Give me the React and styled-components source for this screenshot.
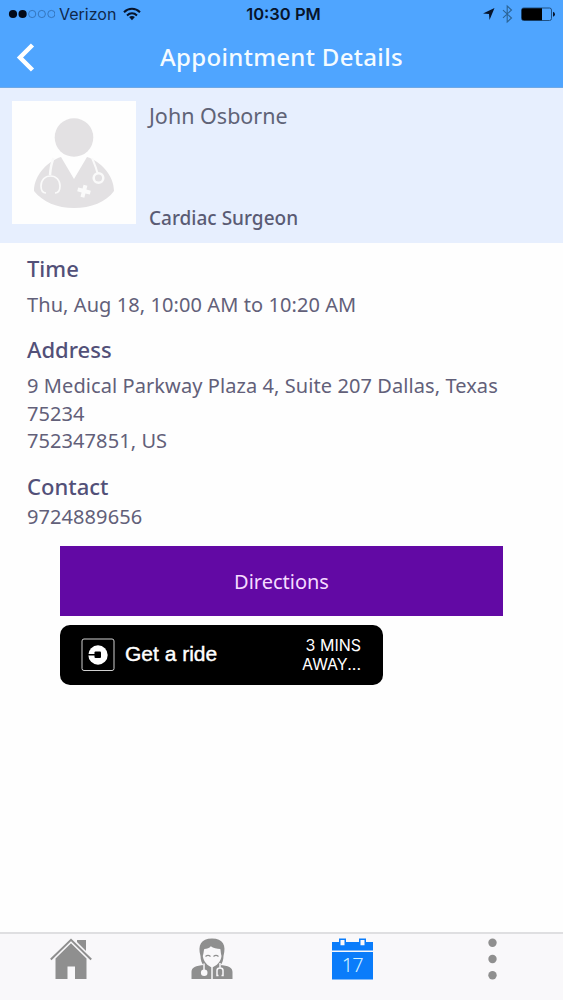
import React from 'react';
import styled, { createGlobalStyle } from 'styled-components';

const colors = {
	blue: '#4fa5ff',
	active: '#0a7cfa',
	pale: '#e7effe',
	heading: '#525078',
	body: '#626079',
	purple: '#6209a4',
	gray: '#8f8f8f'
};

const GlobalStyle = createGlobalStyle`
	* {
		box-sizing: border-box;
	}
	body {
		margin: 0;
		background: #fff;
		font-family: 'Noto Sans', 'Open Sans', sans-serif;
	}
	svg {
		display: block;
		flex: none;
	}
`;

const Screen = styled.div`
	display: flex;
	flex-direction: column;
	width: 563px;
	height: 1000px;
	overflow: hidden;
	background: #fefefe;
`;

const Header = styled.header`
	height: 88px;
	background: ${colors.blue};
	border-bottom: 1px solid #6fa9e6;
`;

const StatusBar = styled.div`
	display: grid;
	grid-template-columns: 1fr auto 1fr;
	align-items: center;
	height: 28px;
	padding: 0 8px;
	font-family: Inter, 'Liberation Sans', sans-serif;
	color: #07142b;
`;

const StatusGroup = styled.div`
	display: flex;
	align-items: center;
	justify-content: ${props => (props.$end ? 'flex-end' : 'flex-start')};
`;

const Carrier = styled.span`
	margin: 0 7px 0 4px;
	font-size: 16px;
	line-height: 28px;
	color: #10284b;
`;

const Clock = styled.span`
	padding-left: 4px;
	font-size: 16.5px;
	line-height: 28px;
	font-weight: 600;
`;

const TitleBar = styled.div`
	display: grid;
	grid-template-columns: 60px 1fr 60px;
	align-items: center;
	height: 58px;
	padding-left: 15px;
	padding-right: 15px;
`;

const Title = styled.h1`
	margin: 0;
	padding-bottom: 1px;
	font-size: 24px;
	line-height: 56px;
	font-weight: 500;
	letter-spacing: 0.33px;
	text-align: center;
	white-space: nowrap;
	color: #f4fbff;
`;

const Profile = styled.section`
	display: flex;
	height: 155px;
	padding: 13px 12px;
	background: ${colors.pale};
`;

const Photo = styled.div`
	width: 124px;
	height: 123px;
	background: #fefefe;
`;

const ProfileText = styled.div`
	display: flex;
	flex-direction: column;
	justify-content: space-between;
	height: 130px;
	padding-left: 13px;
`;

const DoctorName = styled.span`
	font-size: 21.5px;
	line-height: 30px;
	color: #5f6377;
`;

const Speciality = styled.span`
	font-size: 19px;
	line-height: 26px;
	font-weight: 500;
	color: #5a5b74;
`;

const Details = styled.main`
	flex: 1;
	padding: 10px 28px 0 27px;
`;

const Heading = styled.h2`
	margin: 0;
	font-size: 22px;
	line-height: 30px;
	font-weight: 500;
	color: ${colors.heading};
`;

const Text = styled.p`
	margin: ${props => props.$gap || '0'};
	font-size: 20px;
	line-height: 27.6px;
	letter-spacing: 0.08px;
	white-space: nowrap;
	color: ${colors.body};
`;

const Actions = styled.div`
	display: flex;
	flex-direction: column;
	align-items: flex-start;
	gap: 9px;
	padding: 0 33px;
`;

const DirectionsButton = styled.button`
	width: 443px;
	height: 70px;
	padding: 1px 0 0;
	border: 0;
	background: ${colors.purple};
	font-family: inherit;
	font-size: 20px;
	color: #f5dcff;
`;

const RideButton = styled.button`
	display: flex;
	align-items: center;
	width: 323px;
	height: 60px;
	padding: 0 22px 0 21px;
	border: 0;
	border-radius: 10px;
	background: #000;
	font-family: 'Liberation Sans', Arial, sans-serif;
	color: #fff;
`;

const RideLabel = styled.span`
	flex: 1;
	padding: 0 0 2px 10px;
	font-size: 21px;
	text-align: left;
	-webkit-text-stroke: 0.4px #fff;
`;

const RideEta = styled.span`
	font-family: Inter, sans-serif;
	font-size: 16px;
	line-height: 19px;
	text-align: right;
`;

const TabBar = styled.nav`
	display: grid;
	grid-template-columns: repeat(4, 1fr);
	height: 68px;
	border-top: 2px solid #dfdfe1;
	background: #f9f8fa;
`;

const Tab = styled.a`
	display: flex;
	justify-content: center;
	padding: 4px 0 0 1px;
	color: ${props => (props.$active ? colors.active : colors.gray)};
`;

const CalendarIcon = styled.div`
	position: relative;
	width: 41px;
	height: 42px;
`;

const CalendarDay = styled.span`
	position: absolute;
	left: 0;
	top: 14px;
	width: 41px;
	font-size: 20px;
	font-weight: 300;
	line-height: 26px;
	text-align: center;
	letter-spacing: -0.8px;
	color: #d2f1ff;
`;

function SignalDots() {
	return (
		<svg width="47" height="10" viewBox="0 0 47 10">
			{[0, 1, 2, 3, 4].map(i => (
				<circle
					key={i}
					cx={5 + i * 9.6}
					cy="5"
					r={i < 2 ? 4.1 : 3.6}
					fill={i < 2 ? '#030a18' : 'none'}
					stroke={i < 2 ? 'none' : '#2f6aac'}
					strokeWidth="0.8"
				/>
			))}
		</svg>
	);
}

function Wifi() {
	return (
		<svg width="18" height="14" viewBox="0 0 18 14" fill="none" stroke="#07142b" strokeWidth="2">
			<path d="M1 5.3C5.6.7 12.4.7 17 5.3M4 8.5c3-2.9 7-2.9 10 0" />
			<path d="M6.1 10.1c1.8-1.5 4-1.5 5.8 0L9 13.3Z" fill="#07142b" stroke="none" />
		</svg>
	);
}

function StatusIcons() {
	return (
		<svg width="72" height="20" viewBox="0 0 72 20">
			<path d="M0 9.5 11.5 4 6.5 16 6 10Z" fill="#07142b" />
			<path d="m20 6.2 8.5 7.8-4.3 4V2l4.3 4-8.5 7.8" fill="none" stroke="#2b6395" strokeWidth="1.1" />
			<rect x="38.5" y="4" width="30" height="12.5" rx="2" fill="none" stroke="#1f5083" />
			<path d="M40.5 4.3H59v12H40.5q-1.7 0-1.7-1.7V6q0-1.7 1.7-1.7Z" fill="#000" />
			<path d="M70 7.7q2 .8 2 2.5t-2 2.5Z" fill="#07142b" />
		</svg>
	);
}

function DoctorPhoto() {
	return (
		<svg width="124" height="123" viewBox="0 0 124 123">
			<circle cx="62" cy="36.5" r="19.3" fill="#e3e1e3" />
			<path
				d="M49 56C36 60 22 74 22 90c9 11 23 17 40 17s32-6 40-17c0-16-14-30-27-34L62 78Z"
				fill="#e3e1e3"
			/>
			<g fill="none" stroke="#fafafa">
				<path d="M41.500 57c-2 5-3 10-3.500 17" strokeWidth="2.500" />
				<path d="M34 92c-4 0-5-4-5-7 0-6 4-10 9.500-10s9.500 4 9.500 10c0 3-1 7-5 7" strokeWidth="1.700" />
				<path d="M80 57c2 5 4 9 5.500 15" strokeWidth="2" />
				<circle cx="86.500" cy="77" r="4.800" strokeWidth="2.500" />
			</g>
			<path d="M70 84h4v4h4.500v4H74v4.500h-4V92h-4.500v-4H70Z" fill="#fafafa" transform="rotate(14 72 90)" />
		</svg>
	);
}

function UberIcon() {
	return (
		<svg width="34" height="34" viewBox="0 0 34 34">
			<rect x="1" y="1" width="32" height="31.500" rx="2" fill="none" stroke="#d0d0d0" strokeWidth="1" />
			<circle cx="17" cy="17" r="9.700" fill="#fff" />
			<rect x="13.500" y="13.500" width="6.500" height="6.500" rx="1" fill="#000" />
			<rect x="6.500" y="16" width="8" height="1.500" fill="#000" />
		</svg>
	);
}

function HomeIcon() {
	return (
		<svg width="42" height="42" viewBox="0 0 42 42" fill="currentColor">
			<path d="M27 2h9v11l-9-9Z" />
			<path d="M.800 21.500 21 1.800l20.200 19.700" fill="none" stroke="currentColor" strokeWidth="2" />
			<path d="M5.500 20.500 21 5.200l15.500 15.300V41H25V28.500h-7.500V41h-12Z" />
		</svg>
	);
}

function DoctorIcon() {
	return (
		<svg width="42" height="42" viewBox="0 0 42 42" fill="currentColor">
			<path d="M9.500 18C6.500 7 10 .500 21 .500S35.500 7 32.500 18c0 8-5 13-11.500 13S9.500 26 9.500 18Z" />
			<path d="M11.800 18c1-3 .700-5 1.500-7 3 0 5-1 6.500-2.800 2.500 1.800 6 2.800 9.500 2.800.500 2 .400 4 1.200 7-.500 5.500-5 10-9.500 11.500-4.300-1.500-8.500-6-9.200-11.500Z" fill="#f9f8fa" />
			<path d="M14.500 18.500q2.500-2.200 5 0M22.500 18.500q2.500-2.200 5 0" fill="none" stroke="currentColor" strokeWidth="1.300" />
			<path d="M.500 41v-7c0-4.500 4-6.500 13-7L21 30l7.500-3c9 .500 13 2.500 13 7v7Z" />
			<g fill="none" stroke="#f9f8fa" strokeWidth="1.500">
				<path d="M21 29v12" />
				<path d="M13 25.500v9M29 25v5M27.500 37.500H26v-5q0-2.500 3-2.500t3 2.500v5h-1.500" />
			</g>
			<circle cx="13.200" cy="34.800" r="3.300" fill="#f9f8fa" />
		</svg>
	);
}

function Calendar17() {
	return (
		<CalendarIcon>
			<svg width="41" height="42" viewBox="0 0 41 42" fill="currentColor">
				<path d="M0 4h41v8.500H0ZM0 14h41v27.500H0Z" />
				<path d="M7 .500h7v8H7ZM27 .500h7v8h-7Z" />
				<path d="M8.500 2h4v5.300h-4ZM28.500 2h4v5.300h-4Z" fill="#f9f8fa" />
			</svg>
			<CalendarDay>17</CalendarDay>
		</CalendarIcon>
	);
}

function MoreIcon() {
	return (
		<svg width="10" height="42" viewBox="0 0 10 42" fill="currentColor">
			<circle cx="4.500" cy="4.700" r="4.200" />
			<circle cx="4.500" cy="21" r="4.200" />
			<circle cx="4.500" cy="37.300" r="4.200" />
		</svg>
	);
}

export default function App() {
	return (
		<Screen>
			<GlobalStyle />
			<Header>
				<StatusBar>
					<StatusGroup>
						<SignalDots />
						<Carrier>Verizon</Carrier>
						<Wifi />
					</StatusGroup>
					<Clock>10:30 PM</Clock>
					<StatusGroup $end>
						<StatusIcons />
					</StatusGroup>
				</StatusBar>
				<TitleBar>
					<svg width="20" height="30" viewBox="0 0 20 30" fill="none" stroke="#fff" strokeWidth="4.500">
						<path d="M17.500 3 5 15.500 17.500 28" />
					</svg>
					<Title>Appointment Details</Title>
				</TitleBar>
			</Header>
			<Profile>
				<Photo>
					<DoctorPhoto />
				</Photo>
				<ProfileText>
					<DoctorName>John Osborne</DoctorName>
					<Speciality>Cardiac Surgeon</Speciality>
				</ProfileText>
			</Profile>
			<Details>
				<Heading>Time</Heading>
				<Text $gap="8px 0 15px">Thu, Aug 18, 10:00 AM to 10:20 AM</Text>
				<Heading>Address</Heading>
				<Text $gap="8.4px 0 16px">
					9 Medical Parkway Plaza 4, Suite 207 Dallas, Texas
					<br />
					75234
					<br />
					752347851, US
				</Text>
				<Heading>Contact</Heading>
				<Text $gap="2px 0 16px">9724889656</Text>
				<Actions>
					<DirectionsButton>Directions</DirectionsButton>
					<RideButton>
						<UberIcon />
						<RideLabel>Get a ride</RideLabel>
						<RideEta>
							3 MINS
							<br />
							AWAY...
						</RideEta>
					</RideButton>
				</Actions>
			</Details>
			<TabBar>
				<Tab>
					<HomeIcon />
				</Tab>
				<Tab>
					<DoctorIcon />
				</Tab>
				<Tab $active>
					<Calendar17 />
				</Tab>
				<Tab>
					<MoreIcon />
				</Tab>
			</TabBar>
		</Screen>
	);
}
